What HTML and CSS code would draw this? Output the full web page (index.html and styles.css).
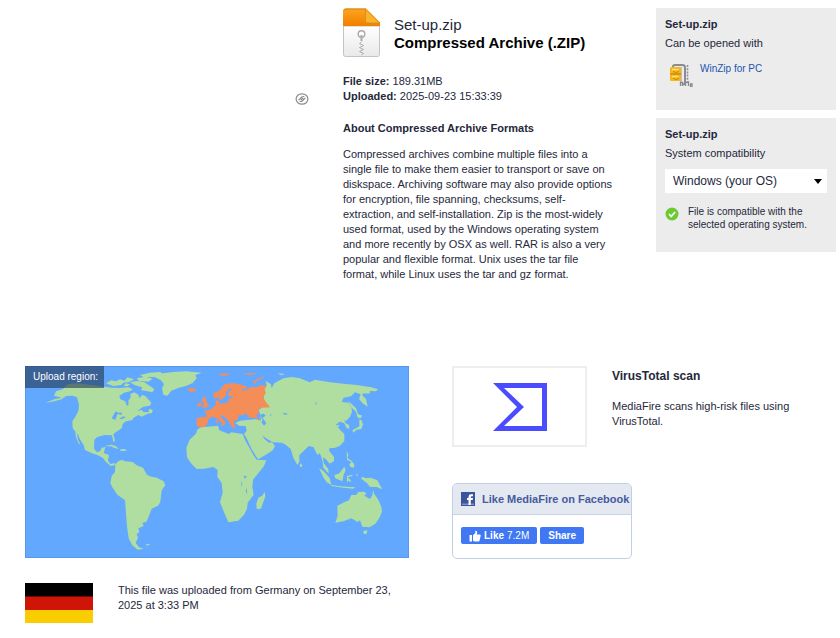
FILE: index.html
```html
<!DOCTYPE html>
<html lang="en">
<head>
<meta charset="utf-8">
<title>Set-up.zip - MediaFire</title>
<link rel="stylesheet" href="styles.css">
</head>
<body>
<main class="page">
  <div class="top">
    <div class="loading">
      <svg class="loading-icon" viewBox="0 0 14 14" aria-hidden="true"><ellipse cx="7" cy="7" rx="5.900" ry="5.200"/><path d="M3.600 8.200L6.800 5Q8.500 4 9.300 5M10.400 5.800L7.200 9Q5.500 10 4.700 9M5.700 7.900L8.300 6.100"/></svg>
    </div>
    <article class="file">
      <header class="file-head">
        <svg class="file-icon" viewBox="0 0 38 50" aria-hidden="true">
          <defs>
            <linearGradient id="orange" x2="0" y2="1"><stop offset="0" stop-color="#ffa51d"/><stop offset="1" stop-color="#f07f00"/></linearGradient>
            <linearGradient id="paper" x2="0" y2="1"><stop offset="0" stop-color="#fff"/><stop offset="1" stop-color="#e9e9e9"/></linearGradient>
          </defs>
          <path d="M.5 18H36.500V46.500Q36.500 48.500 34.500 48.500H2.500Q.5 48.500.5 46.500Z" fill="url(#paper)" stroke="#c4c4c4"/>
          <path d="M0 18V3Q0 .5 2.500.5H23L37 14.500V18Z" fill="url(#orange)"/>
          <path d="M1 2.500Q1 1 3 1H23" fill="none" stroke="#c98324"/>
          <path d="M22.500 1L36.500 15H24.500Q22.500 15 22.500 13Z" fill="#f9b42d" stroke="#d58a16" stroke-width=".8"/>
          <circle cx="18.500" cy="26" r="3.300" fill="#fff" stroke="#aaa" stroke-width="1.400"/>
          <path d="M18.500 27v6" stroke="#aaa" stroke-width="2"/>
          <path d="M18.500 34l-2 1.500 4 2-4 2 4 2-4 2 4 2-2 1.500" fill="none" stroke="#aaa"/>
        </svg>
        <div>
          <div class="file-name">Set-up.zip</div>
          <h1 class="file-type">Compressed Archive (.ZIP)</h1>
        </div>
      </header>
      <dl class="details">
        <div><dt>File size:</dt> <dd>189.31MB</dd></div>
        <div><dt>Uploaded:</dt> <dd>2025-09-23 15:33:39</dd></div>
      </dl>
      <h2 class="about-title">About Compressed Archive Formats</h2>
      <p class="about">Compressed archives combine multiple files into a single file to make them easier to transport or save on diskspace. Archiving software may also provide options for encryption, file spanning, checksums, self-extraction, and self-installation. Zip is the most-widely used format, used by the Windows operating system and more recently by OSX as well. RAR is also a very popular and flexible format. Unix uses the tar file format, while Linux uses the tar and gz format.</p>
    </article>
    <aside class="side">
      <section class="panel open-with">
        <h3>Set-up.zip</h3>
        <p class="panel-sub">Can be opened with</p>
        <div class="app">
          <svg class="app-icon" viewBox="0 0 24 24" aria-hidden="true">
            <path d="M4 4V2.500Q4 1 6 1H13.500Q16 1 16 3.500V18Q16 20.500 13.500 20.500" fill="none" stroke="#8b8b91" stroke-width="2"/>
            <path d="M12 3V19" stroke="#bebec4" stroke-width="2"/>
            <rect x="1" y="3" width="11" height="14" rx="1.500" fill="#f5b51c"/>
            <path d="M1.500 10H12" stroke="#b37909"/>
            <path d="M3 5.500H9.500M3 12.500H9.500" stroke="#ffe36d" stroke-width="1.500"/>
            <path d="M4 7.500l3 1 3-1M4 14.500l3 1 3-1" fill="none" stroke="#c98c0c"/>
            <path d="M18.500 1V20" stroke="#8f8f96" stroke-width="1.600" stroke-dasharray="2 1.200"/>
            <path d="M11.500 22v-3.500h2V22M16.500 22v-3l3-1v4M21.500 23v-3h1.500v3" fill="none" stroke="#898990" stroke-width="1.300"/>
          </svg>
          <a href="#winzip">WinZip for PC</a>
        </div>
      </section>
      <section class="panel compat">
        <h3>Set-up.zip</h3>
        <label class="panel-sub" for="os">System compatibility</label>
        <div class="os-field">
          <select id="os" class="os"><option>Windows (your OS)</option></select>
        </div>
        <div class="status">
          <svg class="check" viewBox="0 0 14 14" aria-hidden="true"><circle cx="7" cy="7" r="6.500" fill="#6cc92e"/><path d="M4 7.200l2.200 2.200L10.200 5" fill="none" stroke="#fff" stroke-width="1.700"/></svg>
          <p>File is compatible with the selected operating system.</p>
        </div>
      </section>
    </aside>
  </div>

  <div class="bottom">
    <section class="region">
      <div class="map">
        <svg class="world" viewBox="15 18 1152 576" aria-hidden="true">
          <g class="land">
            <path d="M76 129L105 117 125 113 102 107 108 94 128 88 143 73 170 70 210 74 250 80 275 83 298 84 325 82 338 88 330 94 312 98 298 108 301 118 316 124 321 139 326 132 325 122 332 112 331 102 343 97 355 104 358 114 367 105 376 108 386 119 394 128 390 137 370 140 352 153 366 150 370 156 385 157 388 146 398 150 396 159 383 161 365 170 355 165 341 173 336 181 318 184 308 192 305 205 285 218 280 222 285 243 280 246 276 226 254 225 232 231 223 239 222 266 231 277 241 273 245 263 256 261 251 279 267 285 264 302 272 313 283 308 285 316 272 318 258 306 248 293 232 285 216 280 195 270 191 256 178 235 175 225 171 220 174 240 182 254 175 249 168 231 166 215 158 204 157 184 166 170 175 153 177 134 171 112 158 107 138 108 125 118 103 124Z"/>
            <path d="M258 70L274 61 288 64 300 58 314 62 322 52 342 58 327 66 310 68 304 75 280 78ZM330 66L352 63 373 67 390 78 403 88 397 97 383 94 364 91 366 82 343 75ZM350 55L378 50 398 56 385 65 357 63ZM360 45L390 38 421 36 428 42 402 51 370 51ZM317 70L330 73 323 79 311 77Z"/>
            <path d="M402 50L428 40 460 36 500 34 545 38 526 45 530 55 518 69 500 77 475 84 454 92 442 107 430 104 426 85 432 72 422 60Z"/>
            <path d="M252 259L273 254 287 258 297 267 283 264 273 259ZM302 268L315 267 321 272 300 273Z"/>
            <path d="M286 312L296 303 307 299 314 304 338 306 350 316 369 323 380 343 389 349 410 353 431 364 436 376 425 391 421 426 414 437 395 446 386 470 379 485 367 488 371 498 355 505 358 516 350 523 354 533 347 549 357 562 371 566 353 569 337 556 326 535 321 500 318 460 315 421 292 404 276 380 271 369 275 348 285 336Z"/>
            <path d="M378 552L389 552 388 556 379 556Z"/>
          </g>
          <g class="land" transform="translate(480 0)">
            <path d="M63 202L82 200 114 197 118 211 147 222 153 217 188 222 196 242 210 266 220 285 230 299 259 301 252 318 235 340 219 359 217 382 221 404 203 428 201 446 192 464 175 482 145 487 133 459 120 426 128 398 125 369 112 350 113 330 100 321 72 326 50 327 34 311 21 292 19 263 29 239 47 222 53 208Z"/>
            <path d="M254 396L256 409 243 446 230 447 229 431 235 413 246 408Z"/>
            <path d="M166 189L180 182 202 180 225 178 243 181 241 165 236 150 247 142 252 113 250 92 260 75 257 63 272 72 275 84 283 70 310 55 335 51 360 55 389 67 405 59 450 67 490 71 530 75 574 82 594 88 588 94 570 93 569 101 551 100 546 105 558 117 563 140 548 130 537 117 542 103 525 97 513 109 490 113 486 126 504 128 514 142 516 155 509 172 498 183 492 180 497 190 507 195 508 207 499 203 493 190 480 185 471 191 467 196 480 195 474 201 480 209 493 222 493 243 480 257 463 264 449 264 447 272 462 291 462 303 449 311 440 300 429 291 431 309 445 327 446 341 430 323 427 301 420 280 412 284 400 261 386 258 378 266 358 285 358 305 352 315 340 293 332 267 318 255 306 248 278 247 258 235 246 226 254 238 267 248 276 247 285 258 278 271 258 284 234 298 216 269 199 233 192 222 200 212 197 198 177 197Z"/>
            <path d="M502 122L515 132 528 145 534 163 547 167 540 176 532 171 528 155 515 143ZM538 179L544 180 549 193 544 207 530 209 520 218 517 211 538 199ZM361 309L367 316 365 322 359 319ZM500 272L505 284 503 295 515 303 523 313 522 323 510 320 508 312 515 307 501 299ZM417 324L430 333 449 354 454 374 440 367 430 352ZM452 374L480 379 500 380 526 382 519 386 490 383 455 378ZM463 346L478 340 493 320 497 330 491 344 487 364 466 355ZM501 348L518 344 517 348 503 352 511 359 514 366 505 362 501 369ZM530 340L534 345 530 350ZM545 350L558 355 572 353 592 361 607 388 590 381 570 380 560 368 545 358Z"/>
            <path d="M472 437L494 426 507 421 514 405 528 405 535 396 553 395 559 401 553 407 570 417 577 405 579 391 583 402 594 418 604 440 606 455 598 474 586 491 569 502 547 500 540 481 533 486 514 475 490 484 466 488 473 467ZM550 513L562 511 560 521 551 522ZM292 40L315 42 304 46Z"/>
          </g>
          <g class="europe" transform="translate(480 0)">
            <path d="M50 174L71 170 80 171 78 160 72 152 90 149 106 137 107 121 118 123 118 132 145 127 146 117 163 110 142 108 147 92 157 90 149 84 139 95 138 106 127 118 117 120 117 112 103 116 99 99 118 92 133 73 158 69 190 76 202 80 195 88 184 85 190 93 216 80 230 82 241 76 260 77 254 88 257 98 250 113 258 127 271 142 244 143 234 151 238 159 228 168 244 184 225 174 204 172 200 160 188 166 177 165 173 180 160 183 166 201 155 200 144 181 131 169 118 165 126 174 137 186 132 197 121 196 128 192 109 174 97 170 86 176 83 189 74 201 57 202 50 196Z"/>
            <path d="M70 112L77 111 80 126 88 140 67 144 71 135 69 127 64 123ZM52 132L63 125 64 137 52 141ZM22 87L32 84 48 86 47 94 29 95ZM114 41L150 40 143 46 130 48ZM190 41L225 38 226 42 204 45ZM218 66L232 56 250 50 251 54 232 61 225 71ZM108 180L113 180 112 190 107 188ZM151 201L167 204 162 207Z"/>
          </g>
          <g class="water">
            <path d="M275 175L287 154 294 158 307 158 303 165 293 161 286 180ZM298 176L310 169 317 172 305 178Z"/>
            <path transform="translate(480 0)" d="M240 164L251 161 257 167 248 173 259 190 252 197 244 187 248 180ZM191 347L200 348 195 357ZM182 360L187 375 185 380ZM199 382L202 402 197 395ZM403 136L411 124 409 132ZM270 163L275 164 272 169ZM307 158L325 161 315 165Z"/>
          </g>
        </svg>
        <span class="map-label">Upload region:</span>
      </div>
      <div class="origin">
        <svg class="flag" viewBox="0 0 68 40" role="img" aria-label="Flag of Germany"><path fill="#000" d="M0 0h68v14H0z"/><path fill="#d01408" d="M0 13.500h68V27H0z"/><path fill="#facd00" d="M0 27h68v13H0z"/></svg>
        <p>This file was uploaded from Germany on September 23, 2025 at 3:33 PM</p>
      </div>
    </section>
    <div class="extras">
      <section class="scan">
        <div class="scan-logo"><svg viewBox="0 0 54 48" aria-hidden="true"><path d="M0 0H54V48H0L24 24ZM11 5L31 24 11 43H49V5Z" fill="#4b4cff" fill-rule="evenodd"/><path d="M0 0H11L31 24 11 48H0L24 24Z" fill="none"/></svg></div>
        <div class="scan-text">
          <h2>VirusTotal scan</h2>
          <p>MediaFire scans high-risk files using VirusTotal.</p>
        </div>
      </section>
      <section class="social">
        <h2 class="social-head">
          <svg class="fb" viewBox="0 0 14 14" aria-hidden="true"><path fill="#3a559b" d="M0 0h14v14H0z"/><path fill="#8192be" d="M1 11.500h12V13H1z"/><path fill="#fff" d="M7.500 13V8H6V6h1.500V4.700Q7.500 2.300 10 2.300h2v2h-1.200q-1 0-1 .9V6H12l-.3 2H9.800v5z"/></svg>
          <span>Like MediaFire on Facebook</span>
        </h2>
        <div class="social-actions">
          <button type="button" class="fb-btn"><svg class="thumb" viewBox="0 0 12 12" aria-hidden="true"><path fill="#fff" d="M.5 5H3v6.500H.5zM4 5.200L6.300 3V.8Q8.500.5 8.200 3L7.800 4.500H11q1 .3.7 1.300L10.600 10.500q-.3 1-1.300 1H5.500L4 10.800z"/></svg><b>Like</b> 7.2M</button>
          <button type="button" class="fb-btn"><b>Share</b></button>
        </div>
      </section>
    </div>
  </div>
</main>
</body>
</html>
```

FILE: styles.css
```css
* { box-sizing: border-box; }
body {
  margin: 0;
  background: #fff;
  color: #25283b;
  font: 11px/15px "Liberation Sans", Arial, sans-serif;
}
h1, h2, h3, p, dl, dd { margin: 0; }

.page { padding: 8px 4px 16px 25px; }

.top {
  display: grid;
  grid-template-columns: 284px minmax(0, 1fr) 180px;
  min-height: 358px;
}
.loading { padding-top: 84px; text-align: right; }
.loading-icon {
  width: 14px;
  height: 14px;
  fill: none;
  stroke: #8b8b8b;
  stroke-width: 1.2;
}

.file { padding: 0 43px 0 34px; }
.file-head { display: flex; gap: 13px; }
.file-icon { width: 38px; height: 50px; flex: none; }
.file-name { margin-top: 8px; font-size: 15px; line-height: 18px; }
.file-type { color: #000; font-size: 15px; line-height: 18px; white-space: nowrap; }
.details { margin-top: 16px; }
.details dt, .details dd { display: inline; }
.details dt { font-weight: bold; }
.about-title { margin: 17px 0 11px; font-size: 11px; line-height: 15px; }

.side { display: flex; flex-direction: column; gap: 8px; }
.panel { padding: 9px; background: #ececec; }
.panel h3 { font-size: 11px; line-height: 15px; }
.panel-sub { display: block; margin-top: 4px; }
.open-with { min-height: 102px; }
.compat { min-height: 134px; }
.app { display: flex; gap: 7px; margin-top: 10px; padding-left: 4px; }
.app-icon { width: 24px; height: 24px; margin-top: 3px; }
.app a { color: #2255b0; font-size: 10px; text-decoration: none; }
.os-field { position: relative; margin-top: 8px; }
.os-field::after {
  content: "";
  position: absolute;
  top: 10px;
  right: 5px;
  border: 4px solid transparent;
  border-top: 5px solid #000;
  border-bottom: 0;
  pointer-events: none;
}
.os {
  display: block;
  width: 100%;
  height: 24px;
  padding: 0 8px;
  border: 0;
  border-radius: 0;
  appearance: none;
  background: #fff;
  color: #25283b;
  font: 12px "Liberation Sans", Arial, sans-serif;
}
.status { display: flex; gap: 9px; margin-top: 12px; font-size: 10px; line-height: 13px; }
.check { width: 14px; height: 14px; flex: none; margin-top: 2px; }

.bottom {
  display: grid;
  grid-template-columns: minmax(0, 1fr) minmax(0, 1fr);
  column-gap: 43px;
}
.map { position: relative; }
.world { display: block; width: 100%; background: #62a8ff; outline: 1px solid #5598ee; outline-offset: -1px; }
.land { fill: #afdea0; }
.europe { fill: #f58d58; }
.water { fill: #62a8ff; }
.map-label {
  position: absolute;
  top: 0;
  left: 0;
  padding: 3px 6px 4px 8px;
  background: rgba(33, 51, 78, .6);
  color: #fff;
  font-size: 10px;
}
.origin { display: flex; gap: 25px; margin-top: 25px; }
.flag { width: 68px; height: 40px; flex: none; }
.origin p { max-width: 290px; }

.scan { display: flex; gap: 25px; }
.scan-logo {
  display: grid;
  place-items: center;
  width: 135px;
  height: 81px;
  flex: none;
  border: 2px solid #eee;
}
.scan-logo svg { width: 54px; height: 48px; }
.scan-text { max-width: 190px; }
.scan-text h2 { margin: 3px 0 15px; font-size: 12px; line-height: 15px; }
.social {
  width: 180px;
  height: 76px;
  margin-top: 36px;
  border: 1px solid #c2cde7;
  border-radius: 5px;
  overflow: hidden;
}
.social-head {
  display: flex;
  align-items: center;
  gap: 7px;
  height: 31px;
  padding-left: 8px;
  border-bottom: 1px solid #c8d3e8;
  background: #e4e8f0;
  color: #465b9f;
  font-size: 11px;
  white-space: nowrap;
}
.fb { width: 14px; height: 14px; flex: none; }
.social-actions { display: flex; gap: 3px; padding: 12px 8px; }
.fb-btn {
  display: flex;
  align-items: center;
  gap: 3px;
  height: 17px;
  padding: 0 8px;
  border: 0;
  border-radius: 2px;
  background: #4077f2;
  color: #fff;
  font: 10px "Liberation Sans", Arial, sans-serif;
}
.thumb { width: 12px; height: 12px; }
```
